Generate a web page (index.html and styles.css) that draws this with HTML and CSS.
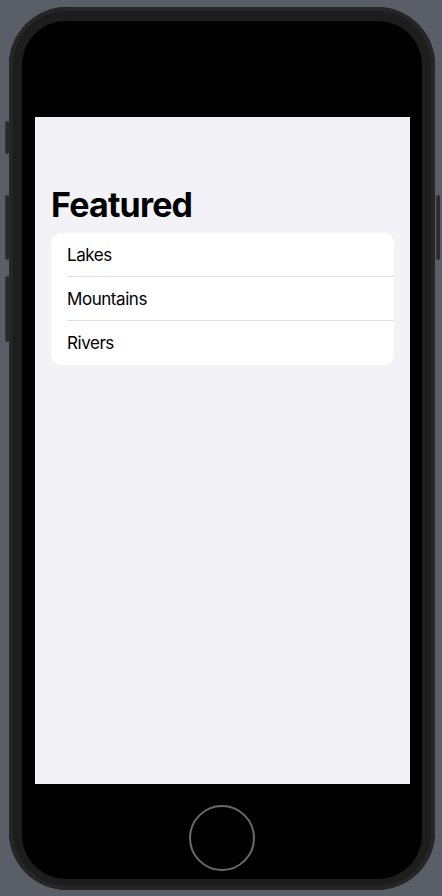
FILE: index.html
```html
<!DOCTYPE html>
<html lang="en">
<head>
<meta charset="utf-8">
<title>Featured</title>
<link rel="stylesheet" href="styles.css">
</head>
<body>
<div class="stage">
  <div class="phone">
    <span class="side-btn mute"></span>
    <span class="side-btn vol-up"></span>
    <span class="side-btn vol-down"></span>
    <span class="side-btn power"></span>
    <div class="bezel">
      <div class="screen">
        <h1 class="large-title">Featured</h1>
        <ul class="list">
          <li class="row">Lakes</li>
          <li class="row">Mountains</li>
          <li class="row">Rivers</li>
        </ul>
      </div>
      <div class="home-area">
        <div class="home-button"></div>
      </div>
    </div>
  </div>
</div>
</body>
</html>
```
FILE: styles.css
```css
html, body {
  margin: 0;
  padding: 0;
}
body {
  background: #5a5f67;
  width: 442px;
  height: 896px;
  overflow: hidden;
  font-family: Inter, "Noto Sans", "Liberation Sans", sans-serif;
}
.stage {
  padding: 7px 7px 6px 9px;
}
.phone {
  position: relative;
  width: 426px;
  height: 883px;
  box-sizing: border-box;
  padding: 14px 13px 11px 13px;
  border-radius: 58px;
  background: #1d1d1e;
  box-shadow: inset 0 0 0 4px #262627;
}
.side-btn {
  position: absolute;
  width: 4px;
  background: #2a2b2d;
  border-radius: 2px;
  box-shadow: inset 1px 0 0 #3a3b3e;
}
.mute { left: -4px; top: 114px; height: 33px; }
.vol-up { left: -4px; top: 188px; height: 65px; }
.vol-down { left: -4px; top: 269px; height: 66px; }
.power { right: -5px; top: 188px; height: 65px; }
.bezel {
  height: 858px;
  background: #000;
  border-radius: 44px;
  padding: 96px 0 0 13px;
  box-sizing: border-box;
  display: flex;
  flex-direction: column;
}
.screen {
  width: 375px;
  height: 667px;
  background: #f2f2f7;
  padding: 67px 16px 0 16px;
  box-sizing: border-box;
}
.large-title {
  margin: 0 0 8px 0;
  font-size: 34px;
  line-height: 41px;
  font-weight: 700;
  color: #000;
  letter-spacing: -0.8px;
}
.list {
  list-style: none;
  margin: 0;
  padding: 0;
  background: #fff;
  border-radius: 10px;
  overflow: hidden;
}
.row {
  height: 44px;
  display: flex;
  align-items: center;
  margin-left: 16px;
  font-size: 17px;
  letter-spacing: -0.45px;
  color: #000;
  box-sizing: border-box;
  border-bottom: 1px solid #dfdfe2;
}
.row:last-child {
  border-bottom: none;
}
.home-area {
  flex: 1;
  display: flex;
  justify-content: center;
  padding-top: 21px;
  padding-right: 13px;
}
.home-button {
  width: 62px;
  height: 62px;
  border-radius: 50%;
  border: 2px solid #6a6a6c;
  margin-left: -1px;
}
```
